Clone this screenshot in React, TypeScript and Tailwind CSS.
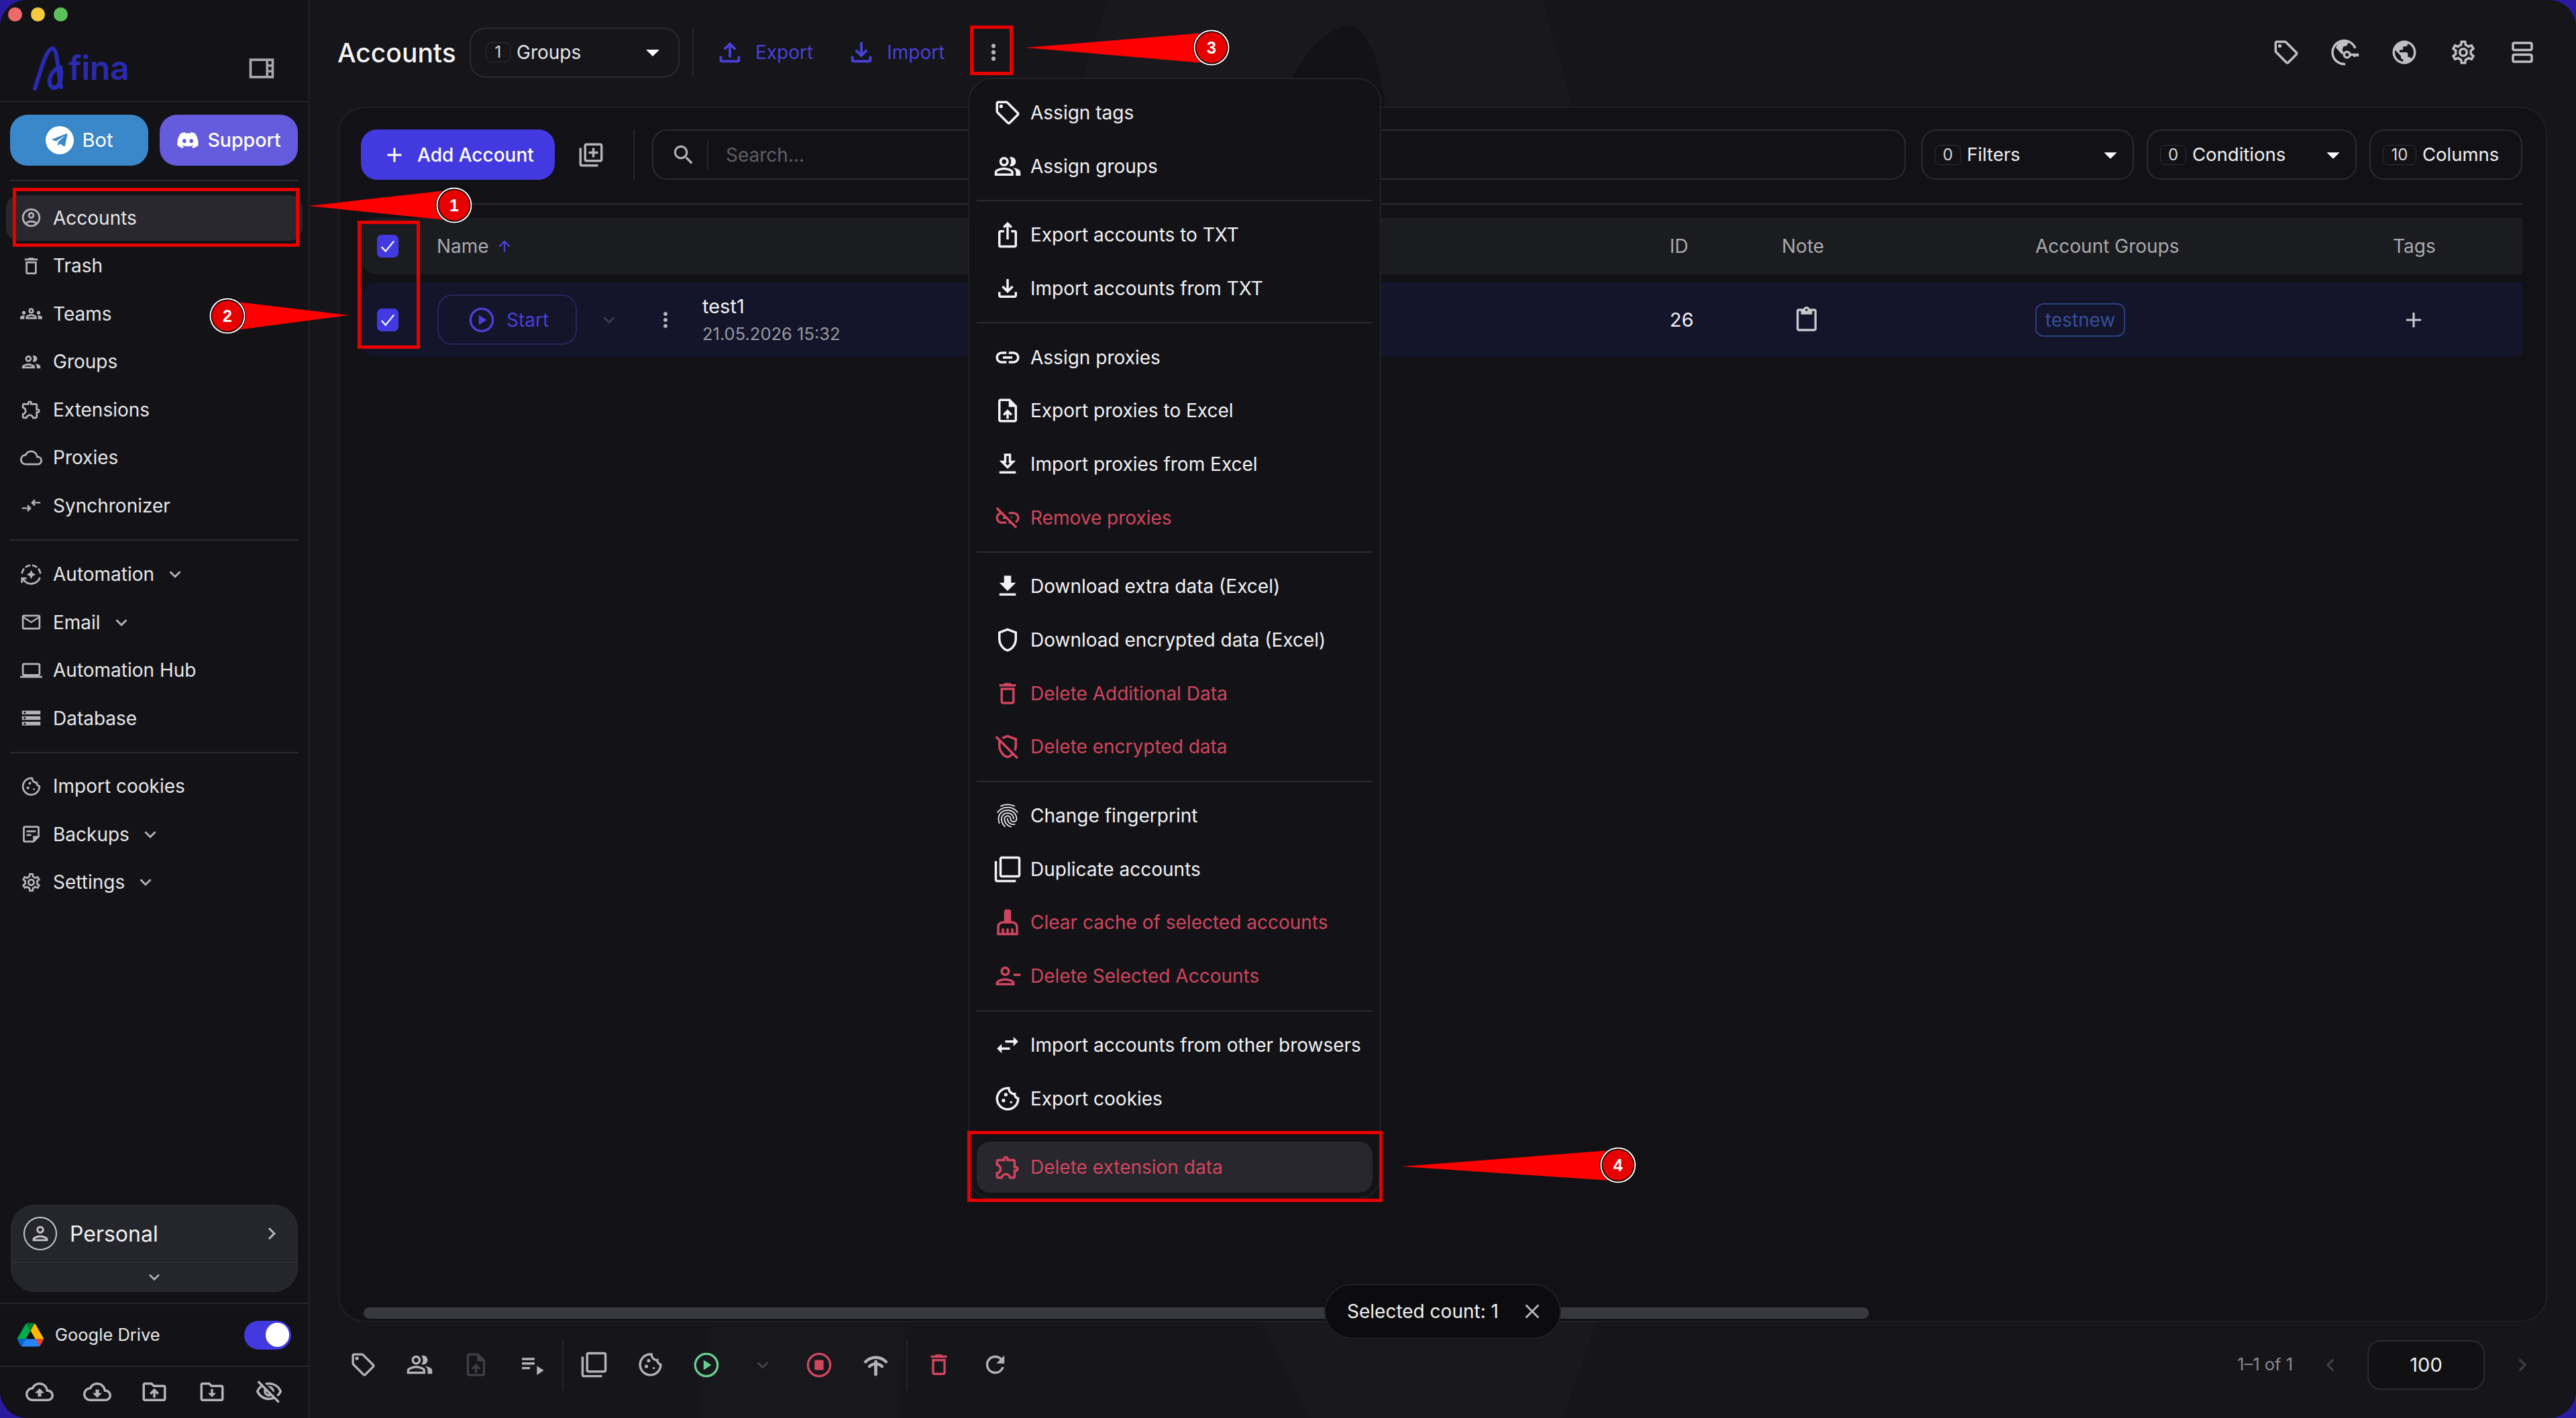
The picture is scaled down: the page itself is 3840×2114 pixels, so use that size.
import React from "react";
import { FaDiscord, FaTelegramPlane } from "react-icons/fa";
import {
  MdAdd, MdArrowDropDown, MdArrowUpward, MdChevronLeft, MdChevronRight, MdCleaningServices, MdClose, MdContentPaste, MdDownload,
  MdFingerprint, MdKeyboardArrowDown, MdMoreVert, MdOutlineAccountCircle, MdOutlineAutoMode, MdOutlineCloud, MdOutlineCloudDownload, MdOutlineCloudUpload,
  MdOutlineCookie, MdOutlineDelete, MdOutlineDownload, MdOutlineDriveFolderUpload, MdOutlineEmail, MdOutlineExtension, MdOutlineFileDownload, MdOutlineFileUpload,
  MdOutlineFilterNone, MdOutlineGroup, MdOutlineGroups, MdOutlineIosShare, MdOutlineLaptop, MdOutlineLibraryAdd, MdOutlineLink, MdOutlineLinkOff, MdOutlineLocalOffer,
  MdOutlinePeopleAlt, MdOutlinePerson, MdOutlinePersonRemove, MdOutlineRemoveModerator, MdOutlineSearch,
  MdOutlineSettings, MdOutlineShield, MdOutlineStickyNote2, MdOutlineSwapHoriz, MdOutlineUploadFile, MdOutlineViewAgenda, MdOutlineViewSidebar,
  MdOutlineVisibilityOff, MdOutlineRefresh, MdPlaylistPlay, MdPublic, MdStorage,
} from "react-icons/md";

type Ic = React.ComponentType<{ size?: number; className?: string }>;

const SyncIcon: Ic = ({ size = 24, className }) => (
  <svg width={size} height={size} viewBox="0 0 24 24" fill="none" stroke="currentColor" strokeWidth="1.8" className={className}>
    <path d="M2 15h9M8 12l3 3-3 3M22 9h-9M16 6l-3 3 3 3" />
  </svg>
);
const FolderDown: Ic = ({ size = 24, className }) => (
  <svg width={size} height={size} viewBox="0 0 24 24" fill="currentColor" className={className}>
    <path d="M20 6h-8l-2-2H4c-1.100 0-2 .9-2 2v12c0 1.100.9 2 2 2h16c1.100 0 2-.9 2-2V8c0-1.100-.9-2-2-2zm0 12H4V6h5.170l2 2H20v10z" />
    <path d="M13 9.500h-2V13H8.500l3.500 3.500 3.500-3.500H13z" />
  </svg>
);
const WifiStem: Ic = ({ size = 24, className }) => (
  <svg width={size} height={size} viewBox="0 0 24 24" fill="none" stroke="currentColor" strokeWidth="2.600" strokeLinecap="round" className={className}>
    <path d="M3 9.500C8 4.500 16 4.500 21 9.500M6.500 13.500c3-3 8-3 11 0" />
    <path d="M12 9.500v11" strokeWidth="2.800" />
  </svg>
);
const GlobeKey: Ic = ({ size = 24, className }) => (
  <svg width={size} height={size} viewBox="0 0 24 24" fill="none" stroke="currentColor" strokeWidth="2" className={className}>
    <path d="M20.500 8.500A10 10 0 1 0 12 22" />
    <path d="M5 5.500C8 2.500 12 2 15.500 3L13 6.500l-2.500.5L9.500 10l1.500 3-2 .5L4 8z" fill="currentColor" stroke="none" />
    <circle cx="13.500" cy="14" r="2.500" />
    <path d="M16 14h7.500M20 14v2M22.500 14v1.500" />
  </svg>
);
const PlayC: Ic = ({ size = 24, className }) => (
  <svg width={size} height={size} viewBox="0 0 24 24" className={className}>
    <circle cx="12" cy="12" r="10" fill="none" stroke="currentColor" strokeWidth="2" />
    <path d="M9.500 7.500l7 4.500-7 4.500z" fill="currentColor" />
  </svg>
);
const StopC: Ic = ({ size = 24, className }) => (
  <svg width={size} height={size} viewBox="0 0 24 24" className={className}>
    <circle cx="12" cy="12" r="10" fill="none" stroke="currentColor" strokeWidth="2" />
    <rect x="8" y="7.500" width="8" height="9" rx="1" fill="currentColor" />
  </svg>
);
const GDrive = () => (
  <svg viewBox="0 0 87.3 78" className="w-[39px] h-[36px]">
    <path d="m6.6 66.85 3.85 6.65c.8 1.4 1.95 2.5 3.3 3.3l13.75-23.8h-27.5c0 1.55.4 3.1 1.2 4.5z" fill="#0066da" />
    <path d="m43.65 25-13.75-23.8c-1.35.8-2.5 1.9-3.3 3.3l-25.4 44a9.06 9.06 0 0 0 -1.2 4.500h27.500z" fill="#00ac47" />
    <path d="m73.55 76.8c1.35-.8 2.5-1.9 3.3-3.3l1.6-2.75 7.65-13.25c.8-1.4 1.2-2.95 1.2-4.5h-27.502l5.852 11.5z" fill="#ea4335" />
    <path d="m43.65 25 13.75-23.8c-1.35-.8-2.9-1.2-4.5-1.2h-18.5c-1.6 0-3.15.45-4.5 1.2z" fill="#00832d" />
    <path d="m59.8 53h-32.3l-13.75 23.8c1.35.8 2.9 1.2 4.5 1.2h50.8c1.6 0 3.15-.45 4.5-1.2z" fill="#2684fc" />
    <path d="m73.4 26.5-12.7-22c-.8-1.4-1.95-2.5-3.3-3.3l-13.75 23.8 16.15 28h27.45c0-1.55-.4-3.1-1.2-4.5z" fill="#ffba00" />
  </svg>
);

function NavRow({ icon: I, label, chevron, active }: { icon: Ic; label: string; chevron?: boolean; active?: boolean }) {
  return (
    <div className="h-[71.5px] flex items-center px-[9px]">
      <div className={`h-[68px] w-full rounded-[20px] flex items-center pl-[21px] ${active ? "bg-[#28282e]" : ""}`}>
        <I size={33} className="text-[#b4b4b8] shrink-0" />
        <span className="ml-[16px] text-[28px] text-[#e6e6e8] leading-none">{label}</span>
        {chevron && <MdKeyboardArrowDown size={34} className="ml-[14px] text-[#b4b4b8]" />}
      </div>
    </div>
  );
}

function Sidebar() {
  return (
    <aside className="w-[461px] shrink-0 border-r border-[#2b2c31] flex flex-col bg-[#131317]">
      <div className="h-[152px] shrink-0 border-b border-[#2b2c31] flex flex-col pl-[12px] pt-[11px]">
        <div className="flex gap-[13px]">
          <span className="w-[21px] h-[21px] rounded-full bg-[#ee6a6a]" />
          <span className="w-[21px] h-[21px] rounded-full bg-[#f7c93e]" />
          <span className="w-[21px] h-[21px] rounded-full bg-[#5cc15c]" />
        </div>
        <div className="flex items-start mt-[36px] pl-[36px] pr-[48px] h-[68px]">
          <svg viewBox="0 0 60 68" className="w-[60px] h-[68px] shrink-0 text-[#2a2ab0]" fill="none" stroke="currentColor" strokeWidth="6" strokeLinecap="round">
            <path d="M4 64C12 40 20 6 30 4c8 0 8 34 13 58" />
            <path d="M42 32C26 36 20 60 32 63c10 0 13-18 10-31" />
          </svg>
          <span className="text-[50px] leading-[68px] -mt-[1px] -ml-[6px] font-semibold text-[#2a2ab0] tracking-[-0.5px]">fina</span>
          <MdOutlineViewSidebar size={44} className="ml-auto mt-[12px] text-[#a8a8ac]" />
        </div>
      </div>
      <div className="flex gap-[17px] px-[15px] mt-[19px]">
        <div className="w-[206px] h-[76px] rounded-[26px] bg-[#3a87c9] flex items-center justify-center gap-[13px]">
          <span className="w-[42px] h-[42px] rounded-full bg-white flex items-center justify-center"><FaTelegramPlane size={26} className="text-[#3a87c9]" /></span>
          <span className="text-[29px] text-white">Bot</span>
        </div>
        <div className="w-[206px] h-[76px] rounded-[26px] bg-[#655cdd] flex items-center justify-center gap-[12px]">
          <FaDiscord size={34} className="text-white" />
          <span className="text-[28.5px] font-medium text-white">Support</span>
        </div>
      </div>
      <div className="h-[2px] mx-[15px] mt-[21px] bg-[#2a2b30]" />
      <nav className="mt-[19px]">
        <NavRow icon={MdOutlineAccountCircle} label="Accounts" active />
        <NavRow icon={MdOutlineDelete} label="Trash" />
        <NavRow icon={MdOutlineGroups} label="Teams" />
        <NavRow icon={MdOutlineGroup} label="Groups" />
        <NavRow icon={MdOutlineExtension} label="Extensions" />
        <NavRow icon={MdOutlineCloud} label="Proxies" />
        <NavRow icon={SyncIcon} label="Synchronizer" />
      </nav>
      <div className="h-[2px] mx-[15px] mt-[14px] mb-[15px] bg-[#2a2b30]" />
      <nav>
        <NavRow icon={MdOutlineAutoMode} label="Automation" chevron />
        <NavRow icon={MdOutlineEmail} label="Email" chevron />
        <NavRow icon={MdOutlineLaptop} label="Automation Hub" />
        <NavRow icon={MdStorage} label="Database" />
      </nav>
      <div className="h-[2px] mx-[15px] mt-[14px] mb-[14px] bg-[#2a2b30]" />
      <nav>
        <NavRow icon={MdOutlineCookie} label="Import cookies" />
        <NavRow icon={MdOutlineStickyNote2} label="Backups" chevron />
        <NavRow icon={MdOutlineSettings} label="Settings" chevron />
      </nav>
      <div className="mt-auto mx-[16px] h-[130px] rounded-[36px] bg-[#25262b] border border-[#2e2f34] flex flex-col">
        <div className="h-[86px] flex items-center pl-[18px] pr-[20px] border-b-2 border-[#2e2f34]">
          <span className="w-[50px] h-[50px] rounded-full border-2 border-[#c8c8cc] flex items-center justify-center"><MdOutlinePerson size={34} className="text-[#c8c8cc]" /></span>
          <span className="ml-[19px] text-[32px] text-[#f0f0f2] mt-[2px]">Personal</span>
          <MdChevronRight size={36} className="ml-auto text-[#b4b4b8]" />
        </div>
        <div className="flex-1 flex items-center justify-center"><MdKeyboardArrowDown size={32} className="text-[#b4b4b8]" /></div>
      </div>
      <div className="h-[2px] mt-[16px] bg-[#25262b]" />
      <div className="h-[92px] flex items-center pl-[26px] pr-[26px]">
        <GDrive />
        <span className="ml-[17px] text-[25.5px] text-[#e6e6e8]">Google Drive</span>
        <span className="ml-auto w-[70px] h-[43px] rounded-full bg-[#4339e0] flex items-center justify-end pr-[3px]"><span className="w-[35px] h-[36px] rounded-full bg-white" /></span>
      </div>
      <div className="h-[2px] bg-[#25262b]" />
      <div className="flex items-center justify-between pl-[38px] pr-[38px] h-[76px] pb-[2px]">
        {[MdOutlineCloudUpload, MdOutlineCloudDownload, MdOutlineDriveFolderUpload, FolderDown, MdOutlineVisibilityOff].map((I, i) => <I key={i} size={42} className="text-[#b4b4b8]" />)}
      </div>
    </aside>
  );
}

function Badge({ n, w }: { n: string; w: string }) {
  return <span className={`${w} h-[30px] rounded-[8px] border border-[#2e2f34] flex items-center justify-center text-[24px] text-[#d8d8da]`}>{n}</span>;
}

function TopBar() {
  return (
    <div className="h-[159px] shrink-0 flex items-center pl-[42px] pr-[59px] pb-[3px]">
      <span className="w-[177px] shrink-0 text-[39px] font-medium text-[#f4f4f6] leading-none whitespace-nowrap">Accounts</span>
      <div className="ml-[20px] w-[313px] h-[75px] rounded-[24px] border-2 border-[#2a2b30] flex items-center pl-[22px] pr-[14px]">
        <Badge n="1" w="w-[37px]" />
        <span className="ml-[9px] text-[28px] text-[#e6e6e8]">Groups</span>
        <MdArrowDropDown size={48} className="ml-auto text-white" />
      </div>
      <div className="w-[2px] h-[75px] bg-[#25262b] ml-[19px]" />
      <MdOutlineFileUpload size={46} className="ml-[31px] text-[#4a41d8]" />
      <span className="ml-[15px] text-[28px] text-[#4a41d8]">Export</span>
      <MdOutlineFileDownload size={46} className="ml-[49px] text-[#4a41d8]" />
      <span className="ml-[15px] text-[28px] text-[#4a41d8]">Import</span>
      <MdMoreVert size={38} className="ml-[54px] text-[#b4b4b8]" />
      <div className="ml-auto flex items-center gap-[46px] text-[#c0c0c4]">
        <MdOutlineLocalOffer size={42} />
        <GlobeKey size={42} />
        <MdPublic size={42} />
        <MdOutlineSettings size={42} />
        <MdOutlineViewAgenda size={42} />
      </div>
    </div>
  );
}

const CheckBox = () => (
  <span className="ml-[24px] w-[32px] h-[34px] rounded-[7px] bg-[#4339e0] flex items-center justify-center">
    <svg viewBox="0 0 24 24" className="w-[26px] h-[26px] text-white" fill="none" stroke="currentColor" strokeWidth="2">
      <path d="M3.500 13l5.500 6L20.500 5" />
    </svg>
  </span>
);

const FilterBtn = ({ n, label, w, bw, tri }: { n: string; label: string; w: string; bw: string; tri?: boolean }) => (
  <div className={`${w} h-[75px] rounded-[22px] border-2 border-[#2a2b30] flex items-center pl-[18px] pr-[10px] shrink-0`}>
    <Badge n={n} w={bw} />
    <span className="ml-[9px] text-[27.5px] text-[#f0f0f2]">{label}</span>
    {tri && <MdArrowDropDown size={46} className="ml-auto text-white" />}
  </div>
);

function Card() {
  const grid = "grid grid-cols-[113px_1838px_167px_378px_533px_193px] items-center";
  return (
    <div className="ml-[43px] mr-[43px] h-[1812px] shrink-0 rounded-[40px] border-2 border-[#1f2024] bg-[#121216] flex flex-col pl-[32px] pr-[35px] pt-[32px]">
      <div className="flex items-center h-[75px]">
        <div className="w-[289px] h-[75px] rounded-[24px] bg-[#4339e0] flex items-center pl-[32px] shrink-0">
          <MdAdd size={36} className="text-white" />
          <span className="ml-[16px] text-[28px] font-medium text-white">Add Account</span>
        </div>
        <MdOutlineLibraryAdd size={42} className="ml-[33px] text-[#b4b4b8] shrink-0" />
        <div className="w-[2px] h-[75px] bg-[#25262b] ml-[42px] shrink-0" />
        <div className="ml-[26px] flex-1 h-[75px] rounded-[22px] border-2 border-[#2a2b30] flex items-center pl-[26px]">
          <MdOutlineSearch size={38} className="text-[#b4b4b8]" />
          <div className="w-[2px] h-[46px] bg-[#25262b] ml-[16px]" />
          <span className="ml-[26px] text-[28px] text-[#5e5f64]">Search...</span>
        </div>
        <div className="ml-[23px] flex gap-[19px] shrink-0">
          <FilterBtn n="0" label="Filters" w="w-[317px]" bw="w-[39px]" tri />
          <FilterBtn n="0" label="Conditions" w="w-[313px]" bw="w-[39px]" tri />
          <FilterBtn n="10" label="Columns" w="w-[228px]" bw="w-[50px]" />
        </div>
      </div>
      <div className="h-[2px] mt-[35px] bg-[#2a2b30]" />
      <div className={`${grid} h-[84px] mt-[20px] bg-[#1b1c20] rounded-l-[24px] text-[28px] text-[#a9a9ad]`}>
        <CheckBox />
        <div className="flex items-center gap-[10px]"><span>Name</span><MdArrowUpward size={26} className="text-[#4a41d8]" /></div>
        <span>ID</span>
        <span>Note</span>
        <span>Account Groups</span>
        <span>Tags</span>
      </div>
      <div className={`${grid} h-[111px] mt-[12px] bg-[#14142a] rounded-l-[24px]`}>
        <CheckBox />
        <div className="flex items-center">
          <div className="ml-[1px] w-[208px] h-[75px] rounded-[22px] border-2 border-[#26265e] flex items-center pl-[44px]">
            <PlayC size={40} className="text-[#4a41d8]" />
            <span className="ml-[17px] text-[28px] text-[#4a41d8]">Start</span>
          </div>
          <MdKeyboardArrowDown size={34} className="ml-[31px] text-[#3c3d4a]" />
          <MdMoreVert size={36} className="ml-[49px] text-[#b4b4b8]" />
          <div className="ml-[37px] flex flex-col pt-[3px]">
            <span className="text-[29px] text-[#f0f0f2] leading-[40px]">test1</span>
            <span className="text-[25.5px] text-[#9a9a9e] leading-[42px]">21.05.2026 15:32</span>
          </div>
        </div>
        <span className="text-[29px] text-[#f0f0f2]">26</span>
        <MdContentPaste size={40} className="ml-[17px] text-[#c8c8cc]" />
        <span className="w-[134px] h-[50px] rounded-[12px] border-2 border-[#2a4080] flex items-center justify-center text-[28px] text-[#34509c]">testnew</span>
        <MdAdd size={38} className="ml-[12px] text-[#c8c8cc]" />
      </div>
      <div className="mt-auto mb-[3px] ml-[4px] h-[17px] w-[2244px] rounded-full bg-[#38393f]" />
    </div>
  );
}

function Bottom() {
  const cell = "w-[84px] flex items-center justify-center shrink-0";
  const dim = "text-[#b4b4b8]";
  return (
    <div className="flex-1 flex items-center pl-[38px] pr-[61px] pb-[16px]">
      {[MdOutlineLocalOffer, MdOutlinePeopleAlt, MdOutlineUploadFile, MdPlaylistPlay].map((I, i) => (
        <div key={i} className={cell}><I size={41} className={i === 2 ? "text-[#3f4045]" : dim} /></div>
      ))}
      <div className="w-[2px] h-[76px] bg-[#25262b] ml-[3px] mr-[3px]" />
      <div className={cell}><MdOutlineFilterNone size={41} className={dim} /></div>
      <div className={cell}><MdOutlineCookie size={41} className={dim} /></div>
      <div className={cell}><PlayC size={40} className="text-[#68d08f]" /></div>
      <div className={cell}><MdKeyboardArrowDown size={34} className="text-[#3f4045]" /></div>
      <div className={cell}><StopC size={40} className="text-[#d0465e]" /></div>
      <div className={cell}><WifiStem size={41} className={dim} /></div>
      <div className="w-[2px] h-[76px] bg-[#25262b] ml-[4px] mr-[4px]" />
      <div className={cell}><MdOutlineDelete size={41} className="text-[#d0465e]" /></div>
      <div className={cell}><MdOutlineRefresh size={41} className={dim} /></div>
      <span className="ml-auto text-[25.5px] text-[#8a8a8e]">1–1 of 1</span>
      <MdChevronLeft size={38} className="ml-[37px] text-[#3f4045]" />
      <div className="ml-[36px] w-[175px] h-[74px] rounded-[20px] border-2 border-[#2a2b30] bg-[#111114] flex items-center justify-center text-[29px] text-[#f0f0f2]">100</div>
      <MdChevronRight size={38} className="ml-[37px] text-[#3f4045]" />
    </div>
  );
}

type Item = { i: Ic; t: string; red?: boolean };
const groups: Item[][] = [
  [{ i: MdOutlineLocalOffer, t: "Assign tags" }, { i: MdOutlinePeopleAlt, t: "Assign groups" }],
  [{ i: MdOutlineIosShare, t: "Export accounts to TXT" }, { i: MdOutlineFileDownload, t: "Import accounts from TXT" }],
  [{ i: MdOutlineLink, t: "Assign proxies" }, { i: MdOutlineUploadFile, t: "Export proxies to Excel" }, { i: MdOutlineDownload, t: "Import proxies from Excel" }, { i: MdOutlineLinkOff, t: "Remove proxies", red: true }],
  [{ i: MdDownload, t: "Download extra data (Excel)" }, { i: MdOutlineShield, t: "Download encrypted data (Excel)" }, { i: MdOutlineDelete, t: "Delete Additional Data", red: true }, { i: MdOutlineRemoveModerator, t: "Delete encrypted data", red: true }],
  [{ i: MdFingerprint, t: "Change fingerprint" }, { i: MdOutlineFilterNone, t: "Duplicate accounts" }, { i: MdCleaningServices, t: "Clear cache of selected accounts", red: true }, { i: MdOutlinePersonRemove, t: "Delete Selected Accounts", red: true }],
  [{ i: MdOutlineSwapHoriz, t: "Import accounts from other browsers" }, { i: MdOutlineCookie, t: "Export cookies" }],
  [{ i: MdOutlineExtension, t: "Delete extension data", red: true }],
];

function Menu() {
  return (
    <div className="absolute left-[1443px] top-[116px] w-[616px] h-[1672px] rounded-[36px] border-2 border-[#212226] bg-[#131317] pt-[10px] flex flex-col">
      {groups.map((g, gi) => (
        <React.Fragment key={gi}>
          {gi > 0 && <div className="h-[2px] shrink-0 mx-[11px] my-[10.5px] bg-[#2a2b30]" />}
          {g.map((it) => (
            <div key={it.t} className={`h-[75.7px] shrink-0 my-[2px] mx-[11px] rounded-[20px] flex items-center pl-[25px] ${it.red ? "text-[#d0465e]" : "text-[#f2f2f4]"} ${gi === 6 ? "bg-[#27272d]" : ""}`}>
              <it.i size={42} className="shrink-0" />
              <span className="ml-[13px] text-[28px] whitespace-nowrap">{it.t}</span>
            </div>
          ))}
        </React.Fragment>
      ))}
    </div>
  );
}

const Callout = ({ n, cx, cy, tip, y1, y2, bx }: { n: string; cx: number; cy: number; tip: number[]; y1: number; y2: number; bx: number }) => (
  <g>
    <polygon points={`${tip[0]},${tip[1]} ${bx},${y1} ${bx},${y2}`} fill="#ff0000" />
    <circle cx={cx} cy={cy} r="27" fill="#ffffff" stroke="#000" strokeWidth="1" />
    <circle cx={cx} cy={cy} r="24.5" fill="#000000" />
    <circle cx={cx} cy={cy} r="23" fill="#e60000" />
    <text x={cx} y={cy + 9} textAnchor="middle" fill="#ffffff" fontSize="25" fontWeight="700" fontFamily="Liberation Sans, sans-serif">{n}</text>
  </g>
);

function Annotations() {
  return (
    <>
      <div className="absolute left-[19px] top-[280px] w-[427px] h-[88px] border-[5px] border-[#e60000]" />
      <div className="absolute left-[533px] top-[329px] w-[93px] h-[191px] border-[5px] border-[#e60000]" />
      <div className="absolute left-[1446px] top-[38px] w-[64px] h-[74px] border-[5px] border-[#e60000]" />
      <div className="absolute left-[1442px] top-[1686px] w-[619px] h-[106px] border-[5px] border-[#e60000]" />
      <svg className="absolute left-0 top-0 w-[3840px] h-[2114px] pointer-events-none" viewBox="0 0 3840 2114">
        <Callout n="1" cx={677} cy={306} tip={[460, 307]} bx={665} y1={284} y2={328} />
        <Callout n="2" cx={339} cy={471} tip={[520, 470]} bx={345} y1={449} y2={493} />
        <Callout n="3" cx={1806} cy={71} tip={[1529, 71]} bx={1795} y1={49} y2={94} />
        <Callout n="4" cx={2412} cy={1737} tip={[2090, 1739]} bx={2400} y1={1715} y2={1760} />
      </svg>
    </>
  );
}

export default function App() {
  return (
    <div className="relative w-[3840px] h-[2114px] overflow-hidden bg-[#2a1aa0] font-[family-name:Inter,sans-serif]">
      <div className="relative isolate w-full h-full rounded-[40px] overflow-hidden flex bg-[#15151a]">
        <svg className="absolute left-0 top-0 w-[3840px] h-[2114px] -z-10" viewBox="0 0 3840 2114">
          <polygon points="1652,0 2300,0 2344,159 1600,159" fill="#18181d" />
          <path d="M1910 159 C1930 80 1990 30 2020 40 C2050 60 2060 120 2065 159z" fill="#131317" />
          <polygon points="1880,1971 2380,1971 2330,2114 1950,2114" fill="#18181d" />
          <polygon points="1060,1971 1350,1971 1340,2114 1040,2114" fill="#17171c" />
        </svg>
        <Sidebar />
        <main className="flex-1 flex flex-col min-w-0">
          <TopBar />
          <Card />
          <Bottom />
        </main>
      </div>
      <Menu />
      <div className="absolute left-[1974px] top-[1914px] w-[353px] h-[82px] rounded-full bg-[#0c0c0e] border-2 border-[#1e1f23] flex items-center pl-[32px]">
        <span className="text-[28px] text-[#f0f0f2]">Selected count: 1</span>
        <MdClose size={36} className="ml-[32px] text-[#b4b4b8]" />
      </div>
      <Annotations />
    </div>
  );
}
